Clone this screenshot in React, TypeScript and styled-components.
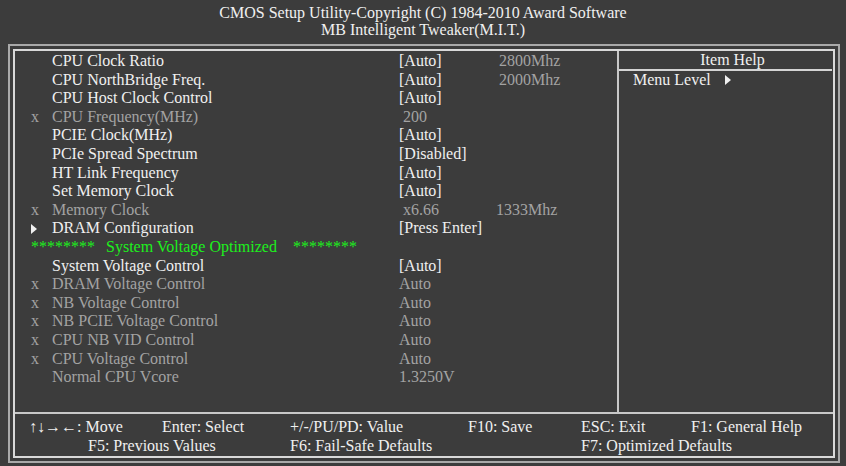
import React from "react";
import styled, { createGlobalStyle } from "styled-components";

const Global = createGlobalStyle`
  html, body { margin: 0; padding: 0; background: #3c3c3c; }
  body { font-family: "Liberation Serif", "Times New Roman", serif; color: #f0f0f0; }
`;

const Screen = styled.div`
  width: 846px;
  height: 466px;
  background: #3c3c3c;
  overflow: hidden;
  font-size: 16px;
`;

const Title = styled.header`
  height: 44px;
  box-sizing: border-box;
  padding-top: 4px;
  text-align: center;
  font-size: 16px;
  line-height: 17px;
  color: #f0f0f0;
`;

const Outer = styled.div`
  margin-left: 8px;
  width: 832px;
  height: 419px;
  box-sizing: border-box;
  border: 2px solid #a9a9a9;
  padding: 3px;
`;

const Inner = styled.div`
  height: 100%;
  box-sizing: border-box;
  border: 2px solid #d9d9d9;
  display: flex;
  flex-direction: column;
`;

const Main = styled.div`
  height: 361px;
  display: flex;
  border-bottom: 2px solid #c8c8c8;
`;

const List = styled.div`
  width: 602px;
  padding-top: 1px;
  border-right: 2px solid #c8c8c8;
`;

const Row = styled.div`
  display: grid;
  grid-template-columns: 16px 21px 347px 100px 1fr;
  height: 18.6px;
  line-height: 18.6px;
  white-space: nowrap;
  color: ${(p: { $dim?: boolean }) => (p.$dim ? "#a3a3a3" : "#f0f0f0")};
`;

const Mark = styled.span`
  grid-column: 2;
  display: flex;
  align-items: center;
`;

const Label = styled.span`
  grid-column: 3;
`;

const Value = styled.span`
  grid-column: 4;
`;

const Extra = styled.span<{ $shift?: number }>`
  grid-column: 5;
  color: #a3a3a3;
  margin-left: ${(p) => p.$shift ?? 0}px;
`;

const Arrow = styled.span`
  display: inline-block;
  width: 0;
  height: 0;
  border-top: 5px solid transparent;
  border-bottom: 5px solid transparent;
  border-left: 6px solid #f0f0f0;
`;

const GreenRow = styled.div`
  display: flex;
  height: 18.6px;
  line-height: 18.6px;
  padding-left: 16px;
  color: #1cf01c;
  white-space: nowrap;
`;

const GreenPart = styled.span<{ $ml: number }>`
  margin-left: ${(p) => p.$ml}px;
`;

const Help = styled.div`
  flex: 1;
  display: flex;
  flex-direction: column;
`;

const HelpHead = styled.div`
  height: 18px;
  line-height: 17px;
  text-align: center;
  padding-left: 14px;
  border-bottom: 2px solid #d4d4d4;
  margin-right: 1px;
`;

const HelpLine = styled.div`
  padding-left: 14px;
  line-height: 18px;
  display: flex;
  align-items: center;
  gap: 14px;
`;

const Footer = styled.div`
  flex: 1;
  padding-top: 3px;
  display: grid;
  grid-template-columns: 14px 59px 74px 128px 178px 113px 110px 1fr;
  grid-auto-rows: 19px;
  line-height: 19px;
  white-space: nowrap;
  color: #f0f0f0;
`;

const Key = styled.span<{ $col: number; $row: number }>`
  grid-column: ${(p) => p.$col} / span 1;
  grid-row: ${(p) => p.$row};
`;

type Item = {
  mark?: "x" | "arrow";
  label: string;
  value: string;
  extra?: string;
  shift?: number;
  dim?: boolean;
};

const top: Item[] = [
  { label: "CPU Clock Ratio", value: "[Auto]", extra: "2800Mhz" },
  { label: "CPU NorthBridge Freq.", value: "[Auto]", extra: "2000Mhz" },
  { label: "CPU Host Clock Control", value: "[Auto]" },
  { mark: "x", label: "CPU Frequency(MHz)", value: "\u00a0200", dim: true },
  { label: "PCIE Clock(MHz)", value: "[Auto]" },
  { label: "PCIe Spread Spectrum", value: "[Disabled]" },
  { label: "HT Link Frequency", value: "[Auto]" },
  { label: "Set Memory Clock", value: "[Auto]" },
  { mark: "x", label: "Memory Clock", value: "\u00a0x6.66", extra: "1333Mhz", shift: -3, dim: true },
  { mark: "arrow", label: "DRAM Configuration", value: "[Press Enter]" },
];

const bottom: Item[] = [
  { label: "System Voltage Control", value: "[Auto]" },
  { mark: "x", label: "DRAM Voltage Control", value: "Auto", dim: true },
  { mark: "x", label: "NB Voltage Control", value: "Auto", dim: true },
  { mark: "x", label: "NB PCIE Voltage Control", value: "Auto", dim: true },
  { mark: "x", label: "CPU NB VID Control", value: "Auto", dim: true },
  { mark: "x", label: "CPU Voltage Control", value: "Auto", dim: true },
  { label: "Normal CPU Vcore", value: "1.3250V", dim: true },
];

const renderRow = (it: Item) => (
  <Row key={it.label} $dim={it.dim}>
    <Mark>{it.mark === "x" ? "x" : it.mark === "arrow" ? <Arrow /> : null}</Mark>
    <Label>{it.label}</Label>
    <Value>{it.value}</Value>
    {it.extra && <Extra $shift={it.shift}>{it.extra}</Extra>}
  </Row>
);

export default function App() {
  return (
    <Screen>
      <Global />
      <Title>
        <div>CMOS Setup Utility-Copyright (C) 1984-2010 Award Software</div>
        <div>MB Intelligent Tweaker(M.I.T.)</div>
      </Title>
      <Outer>
        <Inner>
          <Main>
            <List>
              {top.map(renderRow)}
              <GreenRow>
                <GreenPart $ml={0}>********</GreenPart>
                <GreenPart $ml={11}>System Voltage Optimized</GreenPart>
                <GreenPart $ml={16}>********</GreenPart>
              </GreenRow>
              {bottom.map(renderRow)}
            </List>
            <Help>
              <HelpHead>Item Help</HelpHead>
              <HelpLine>
                Menu Level <Arrow />
              </HelpLine>
            </Help>
          </Main>
          <Footer>
            <Key $col={2} $row={1}>↑↓→←: Move</Key>
            <Key $col={4} $row={1}>Enter: Select</Key>
            <Key $col={5} $row={1}>+/-/PU/PD: Value</Key>
            <Key $col={6} $row={1}>F10: Save</Key>
            <Key $col={7} $row={1}>ESC: Exit</Key>
            <Key $col={8} $row={1}>F1: General Help</Key>
            <Key $col={3} $row={2}>F5: Previous Values</Key>
            <Key $col={5} $row={2}>F6: Fail-Safe Defaults</Key>
            <Key $col={7} $row={2}>F7: Optimized Defaults</Key>
          </Footer>
        </Inner>
      </Outer>
    </Screen>
  );
}
